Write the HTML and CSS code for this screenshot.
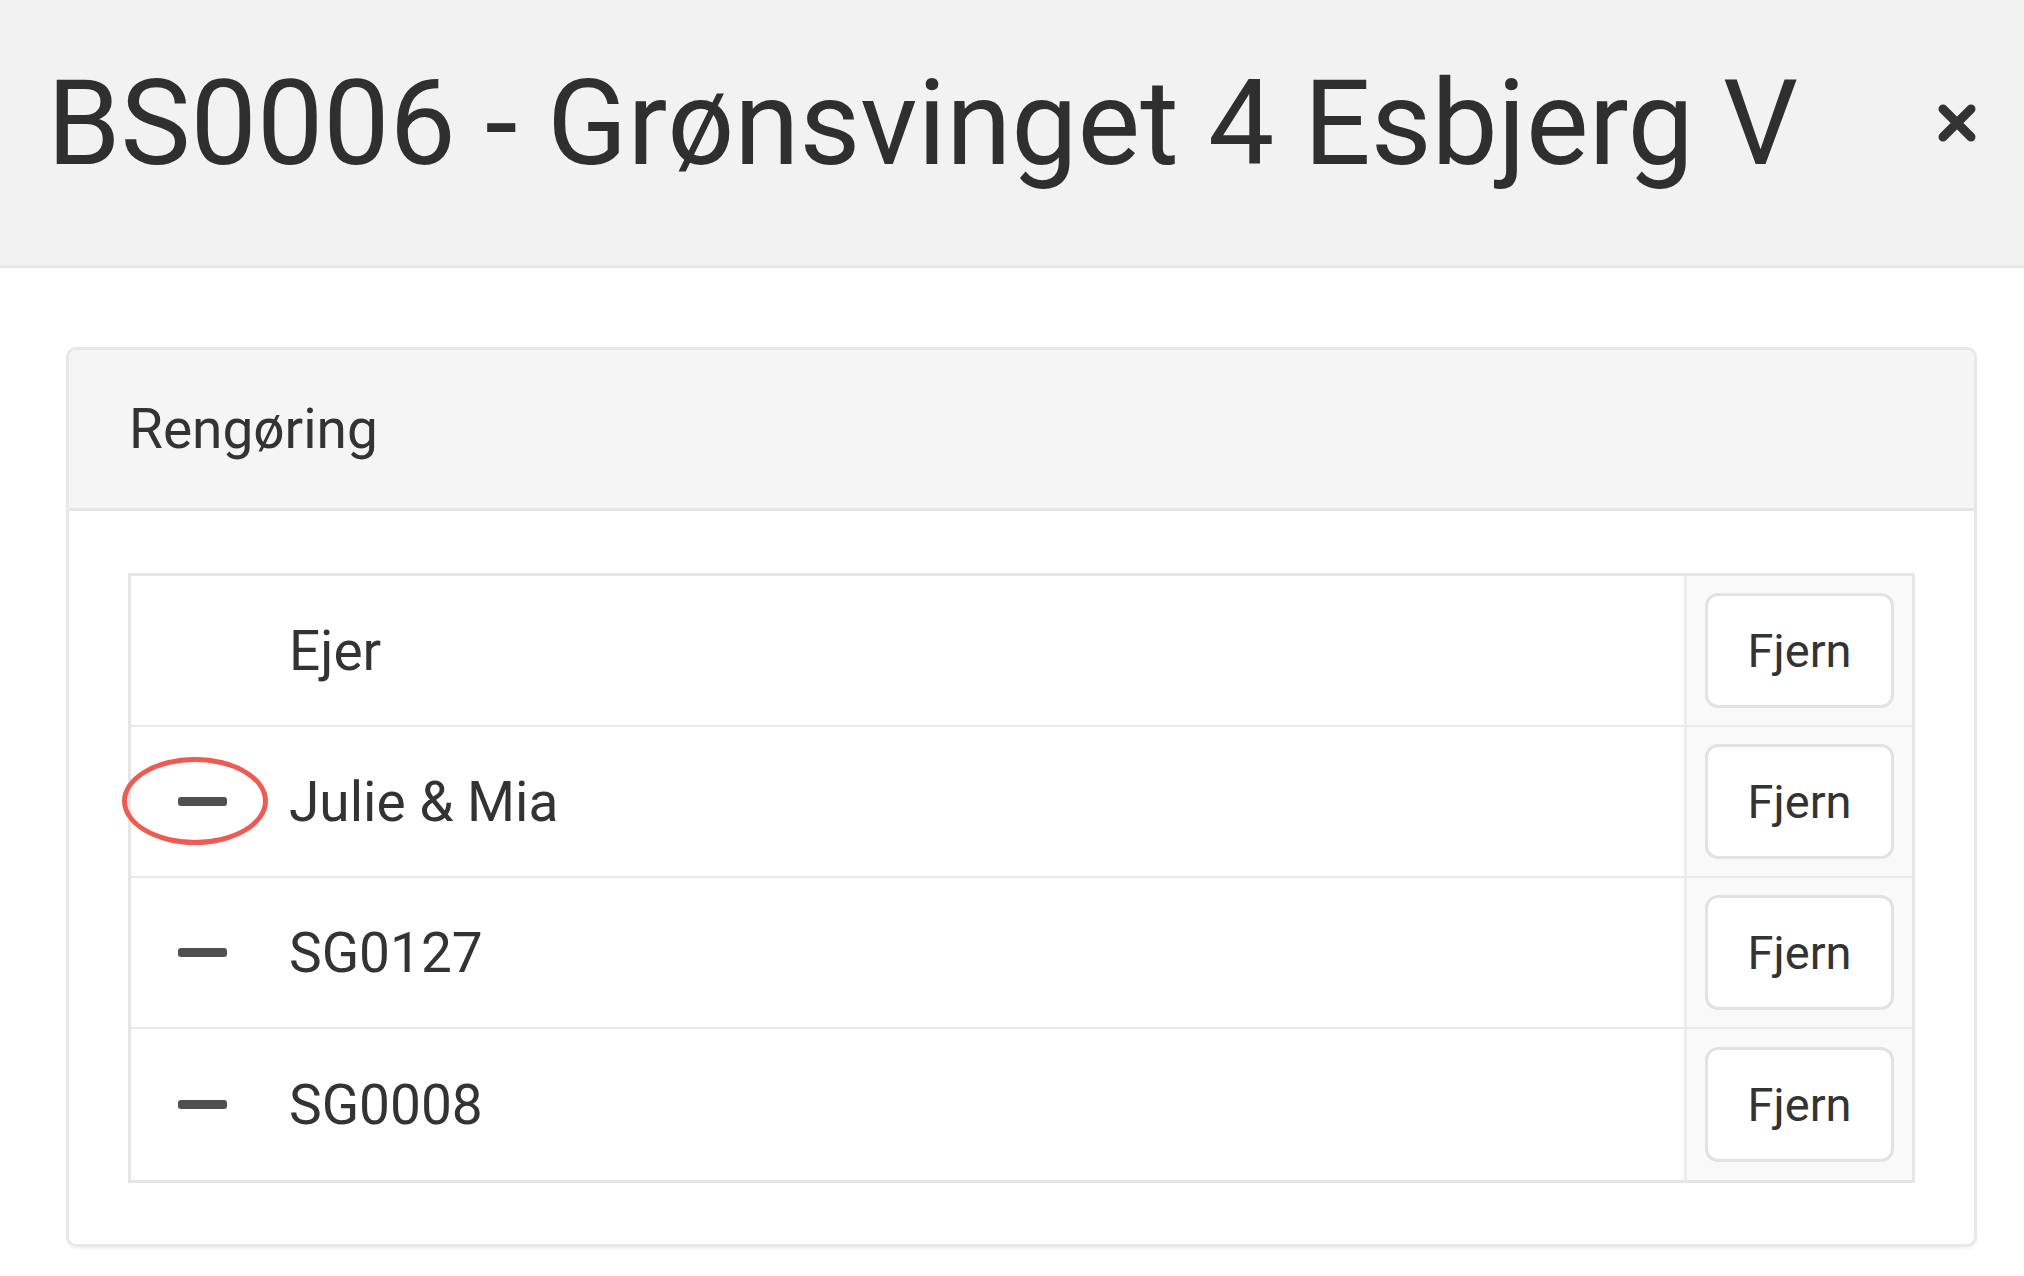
FILE: index.html
```html
<!DOCTYPE html>
<html lang="da">
<head>
<meta charset="utf-8">
<title>BS0006 - Grønsvinget 4 Esbjerg V</title>
<link rel="stylesheet" href="styles.css">
</head>
<body>
<div class="modal">
  <header class="modal-header">
    <h1 class="modal-title">BS0006 - Grønsvinget 4 Esbjerg V</h1>
    <button class="close" aria-label="Luk">
      <svg viewBox="0 0 40 40" width="40" height="40"><path d="M6 6 L34 34 M34 6 L6 34" stroke="#333" stroke-width="9" stroke-linecap="round" fill="none"/></svg>
    </button>
  </header>
  <div class="modal-body">
    <section class="panel">
      <div class="panel-heading">Rengøring</div>
      <div class="panel-body">
        <div class="list">
          <div class="row">
            <div class="cell-main"><span class="icon-slot"></span><span class="name">Ejer</span></div>
            <div class="cell-action"><button class="btn">Fjern</button></div>
          </div>
          <div class="row">
            <div class="cell-main"><span class="icon-slot"><span class="minus"></span></span><span class="name">Julie &amp; Mia</span><span class="highlight"></span></div>
            <div class="cell-action"><button class="btn">Fjern</button></div>
          </div>
          <div class="row">
            <div class="cell-main"><span class="icon-slot"><span class="minus"></span></span><span class="name">SG0127</span></div>
            <div class="cell-action"><button class="btn">Fjern</button></div>
          </div>
          <div class="row">
            <div class="cell-main"><span class="icon-slot"><span class="minus"></span></span><span class="name">SG0008</span></div>
            <div class="cell-action"><button class="btn">Fjern</button></div>
          </div>
        </div>
      </div>
    </section>
  </div>
</div>
</body>
</html>
```
FILE: styles.css
```css
html, body {
  margin: 0;
  padding: 0;
  background: #ffffff;
  font-family: Roboto, "Noto Sans", "Liberation Sans", sans-serif;
  color: #333333;
}

.modal {
  width: 2024px;
  min-height: 1276px;
  background: #ffffff;
}

.modal-header {
  height: 266px;
  background: #f2f2f2;
  border-bottom: 2px solid #e6e6e6;
  display: flex;
  align-items: center;
  padding: 0 47px 0 47px;
  box-sizing: content-box;
}

.modal-title {
  flex: 1;
  margin: 0;
  font-size: 118px;
  font-weight: 400;
  line-height: 1;
  color: #2f2f2f;
  position: relative;
  top: -9px;
  white-space: nowrap;
}

.close {
  width: 40px;
  height: 40px;
  padding: 0;
  border: 0;
  background: transparent;
  position: relative;
  top: -10px;
}

.close svg {
  display: block;
}

.modal-body {
  padding: 79px 47px 0 66px;
}

.panel {
  border: 3px solid #e8e8e8;
  border-radius: 10px;
  box-shadow: 0 2px 3px rgba(0, 0, 0, 0.05);
  overflow: hidden;
  width: 1905px;
}

.panel-heading {
  height: 161px;
  box-sizing: border-box;
  background: #f5f5f5;
  border-bottom: 3px solid #e6e6e6;
  padding: 0 60px;
  display: flex;
  align-items: center;
  font-size: 55px;
  color: #333333;
}

.panel-body {
  padding: 62px 59px 61px 59px;
}

.list {
  border: 3px solid #e6e6e6;
}

.row {
  display: flex;
  height: 149px;
  border-bottom: 2px solid #e9e9e9;
}

.row:last-child {
  border-bottom: 0;
  height: 151px;
}

.cell-main {
  flex: 1;
  display: flex;
  align-items: center;
  position: relative;
  border-right: 3px solid #ececec;
}

.icon-slot {
  width: 158px;
  display: flex;
  align-items: center;
  padding-left: 47px;
  box-sizing: border-box;
}

.minus {
  display: block;
  width: 49px;
  height: 9px;
  border-radius: 3px;
  background: #505050;
}

.name {
  font-size: 55px;
  color: #333333;
}

.highlight {
  position: absolute;
  left: -9px;
  top: 30px;
  width: 136px;
  height: 78px;
  border: 5px solid #ef5a52;
  border-radius: 50%;
  pointer-events: none;
}

.cell-action {
  width: 225px;
  background: #f9f9f9;
  display: flex;
  align-items: center;
  justify-content: center;
}

.btn {
  width: 189px;
  height: 115px;
  box-sizing: border-box;
  background: #ffffff;
  border: 3px solid #e2e2e2;
  border-radius: 13px;
  font-family: Roboto, "Noto Sans", "Liberation Sans", sans-serif;
  font-size: 47px;
  color: #333333;
  padding: 0;
}
```
